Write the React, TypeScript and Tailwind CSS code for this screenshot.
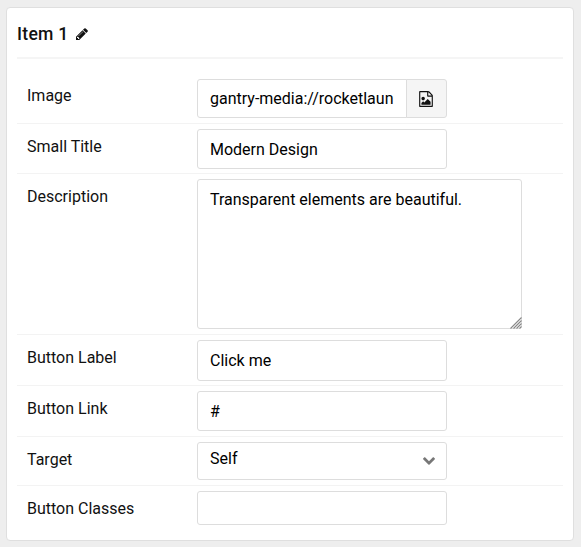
import type { ReactNode } from 'react';

const field =
  'block w-[250px] rounded-[3px] border border-[#dddddd] bg-white px-3 text-base leading-6 text-black outline-none';

function Row({ label, className, children }: { label: string; className: string; children: ReactNode }) {
  return (
    <div className={`flex items-start border-[#f3f3f3] pl-[10px] ${className}`}>
      <div className="w-[170px] shrink-0 pt-1.5 leading-6">{label}</div>
      {children}
    </div>
  );
}

function PencilIcon() {
  return (
    <svg viewBox="0 0 1792 1792" className="size-[14px]" fill="currentColor" aria-hidden="true">
      <path d="M491 1536l91-91-235-235-91 91v107h128v128h107zm523-928q0-22-22-22-10 0-17 7l-542 542q-7 7-7 17 0 22 22 22 10 0 17-7l542-542q7-7 7-17zm-54-192l416 416-832 832h-416v-416zm683 96q0 53-37 90l-166 166-416-416 166-165q36-38 90-38 53 0 91 38l235 234q37 39 37 91z" />
    </svg>
  );
}

function FileImageIcon() {
  return (
    <svg viewBox="0 0 1792 1792" className="mr-0.5 size-4" fill="currentColor" aria-hidden="true">
      <path d="M1596 380q28 28 48 76t20 88v1152q0 40-28 68t-68 28h-1344q-40 0-68-28t-28-68v-1600q0-40 28-68t68-28h896q40 0 88 20t76 48zm-444-244v376h376q-10-29-22-41l-313-313q-12-12-41-22zm384 1528v-1024h-416q-40 0-68-28t-28-68v-416h-768v1536h1280zm-128-448v320h-1024v-192l192-192 128 128 384-384zm-832-192q-80 0-136-56t-56-136 56-136 136-56 136 56 56 136-56 136-136 56z" />
    </svg>
  );
}

export default function App() {
  return (
    <div className="h-[547px] w-[581px] bg-[#eeeeee] pt-[7px] pl-[6px] font-['Roboto',sans-serif] text-base text-[#111111]">
      <div className="h-[534px] w-[568px] rounded-[4px] border border-[#dfdfdf] bg-white px-[10px]">
        <div className="flex h-[51px] items-center gap-[6px] border-b-2 border-[#f5f5f5] pt-[3px]">
          <h4 className="text-[17.6px] leading-6 font-medium tracking-[0.28px]">Item 1</h4>
          <PencilIcon />
        </div>

        <Row label="Image" className="mt-[14px] h-[51px] border-b pt-[5px]">
          <div className="flex pt-px">
            <input
              className="block h-[39px] w-[210px] rounded-l-[3px] border border-[#dddddd] bg-white px-3 text-base text-black outline-none"
              defaultValue="gantry-media://rocketlaun"
            />
            <button className="-ml-px flex h-[39px] w-[41px] items-center justify-center rounded-r-[3px] border border-[#dddddd] bg-[#f5f5f5]">
              <FileImageIcon />
            </button>
          </div>
        </Row>
        <Row label="Small Title" className="h-[50px] border-b pt-[5px]">
          <input className={`${field} h-[40px]`} defaultValue="Modern Design" />
        </Row>
        <Row label="Description" className="h-[161px] border-b pt-[5px]">
          <div className="relative h-[150px] w-[325px] rounded-[3px] border border-[#dddddd] px-3 pt-2 leading-6 text-black">
            Transparent elements are beautiful.
            <svg
              viewBox="0 0 12 12"
              className="absolute -right-px -bottom-px size-3"
              stroke="#888888"
              strokeWidth="1.1"
              aria-hidden="true"
            >
              <path d="M0.5 11.5L11.5 0.5M3.5 11.5L11.5 3.5M6.5 11.5L11.5 6.5M9.5 11.5L11.5 9.5" />
            </svg>
          </div>
        </Row>
        <Row label="Button Label" className="h-[51px] border-b pt-[5px]">
          <input className={`${field} h-[41px]`} defaultValue="Click me" />
        </Row>
        <Row label="Button Link" className="h-[51px] border-b pt-[5px]">
          <input className={`${field} h-[40px]`} defaultValue="#" />
        </Row>
        <Row label="Target" className="h-[49px] border-b pt-[5px]">
          <div className={`${field} h-[38px]`}>
            <div className="flex items-center justify-between pt-1">
              <span>Self</span>
              <svg viewBox="90 533 1612 1035" className="mt-[3px] -mr-[1px] h-[8px] w-[12px]" fill="#777777" aria-hidden="true">
                <path d="M1683 808l-742 741q-19 19-45 19t-45-19l-742-741q-19-19-19-45.5t19-45.5l166-165q19-19 45-19t45 19l531 531 531-531q19-19 45-19t45 19l166 165q19 19 19 45.5t-19 45.5z" />
              </svg>
            </div>
          </div>
        </Row>
        <Row label="Button Classes" className="h-[50px] pt-[5px]">
          <input className={`${field} h-[34px]`} defaultValue="" />
        </Row>
      </div>
    </div>
  );
}
